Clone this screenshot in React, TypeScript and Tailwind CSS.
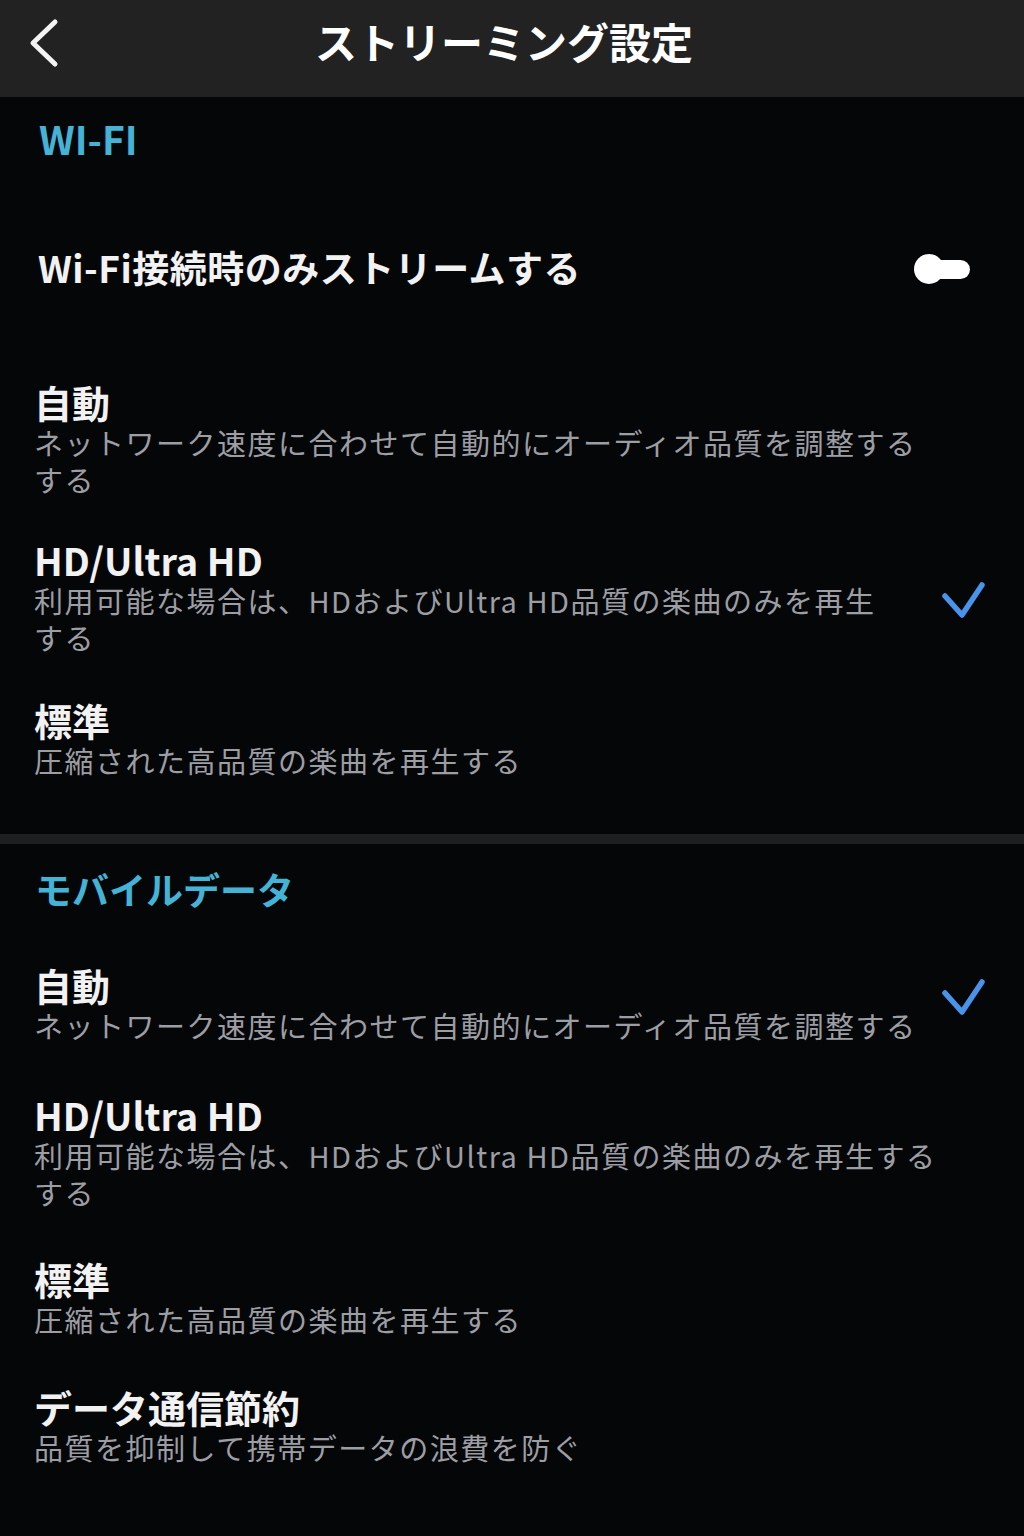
import React from "react";

const FONT = { fontFamily: '"Noto Sans CJK JP", "Noto Sans", sans-serif' };

function Check() {
  return (
    <svg width="44" height="40" viewBox="0 0 44 40" className="block">
      <polyline
        points="3,14 20,33 40,3"
        fill="none"
        stroke="#4a93ea"
        strokeWidth="5.5"
        strokeLinecap="round"
        strokeLinejoin="round"
      />
    </svg>
  );
}

type RowProps = {
  title: string;
  lines: string[];
  checked?: boolean;
  className?: string;
  checkClass?: string;
};

function OptionRow({ title, lines, checked, className, checkClass }: RowProps) {
  return (
    <div className={`flex items-start justify-between ${className ?? ""}`}>
      <div className="flex flex-col">
        <div className="text-[38px] leading-[44px] font-bold text-[#f2f2f2] whitespace-nowrap">
          {title}
        </div>
        {lines.map((l, i) => (
          <div
            key={i}
            className="text-[29px] leading-[37px] tracking-[1.5px] text-[#9c9ea4] whitespace-nowrap"
          >
            {l}
          </div>
        ))}
      </div>
      {checked && <div className={checkClass}><Check /></div>}
    </div>
  );
}

export default function App() {
  return (
    <div className="w-[1024px] min-h-[1536px] bg-[#050608]" style={FONT}>
      <header className="h-[97px] pb-[16px] bg-[#222222] grid grid-cols-[90px_1fr_106px] items-center">
        <div className="pl-[26px] pt-[4px] flex items-center">
          <svg width="36" height="50" viewBox="0 0 36 50">
            <polyline
              points="29,4 7,25 29,46"
              fill="none"
              stroke="#f4f4f4"
              strokeWidth="5"
              strokeLinecap="round"
              strokeLinejoin="round"
            />
          </svg>
        </div>
        <h1 className="text-center text-[42px] leading-[48px] font-bold text-white">
          ストリーミング設定
        </h1>
        <div />
      </header>

      <section className="pl-[34px] pr-[38px]">
        <h2 className="mt-[19px] pl-[5px] text-[39px] leading-[44px] font-bold text-[#45b3d6]">
          WI-FI
        </h2>

        <div className="mt-[85px] flex items-center justify-between">
          <div className="pl-[4px] text-[37px] leading-[44px] font-bold text-[#f2f2f2] tracking-[0.5px]">
            Wi-Fi接続時のみストリームする
          </div>
          <div className="relative w-[56px] h-[30px] mr-[16px] mt-[4px]">
            <div className="absolute right-0 top-[6px] w-[44px] h-[19px] rounded-full bg-white" />
            <div className="absolute left-0 top-0 w-[30px] h-[30px] rounded-full bg-white" />
          </div>
        </div>

        <OptionRow
          className="mt-[91px]"
          title="自動"
          lines={["ネットワーク速度に合わせて自動的にオーディオ品質を調整する", "する"]}
        />
        <OptionRow
          className="mt-[40px]"
          title="HD/Ultra HD"
          lines={["利用可能な場合は、HDおよびUltra HD品質の楽曲のみを再生", "する"]}
          checked
          checkClass="mt-[44px]"
        />
        <OptionRow
          className="mt-[42px]"
          title="標準"
          lines={["圧縮された高品質の楽曲を再生する"]}
        />
      </section>

      <div className="mt-[55px] h-[10px] bg-[#1e1f22]" />

      <section className="pl-[34px] pr-[38px] pb-[60px]">
        <h2 className="mt-[23px] pl-[1px] text-[37px] leading-[44px] font-bold text-[#45b3d6]">
          モバイルデータ
        </h2>
        <OptionRow
          className="mt-[52px]"
          title="自動"
          lines={["ネットワーク速度に合わせて自動的にオーディオ品質を調整する"]}
          checked
          checkClass="mt-[16px]"
        />
        <OptionRow
          className="mt-[49px]"
          title="HD/Ultra HD"
          lines={["利用可能な場合は、HDおよびUltra HD品質の楽曲のみを再生する", "する"]}
        />
        <OptionRow
          className="mt-[46px]"
          title="標準"
          lines={["圧縮された高品質の楽曲を再生する"]}
        />
        <OptionRow
          className="mt-[47px]"
          title="データ通信節約"
          lines={["品質を抑制して携帯データの浪費を防ぐ"]}
        />
      </section>
    </div>
  );
}
